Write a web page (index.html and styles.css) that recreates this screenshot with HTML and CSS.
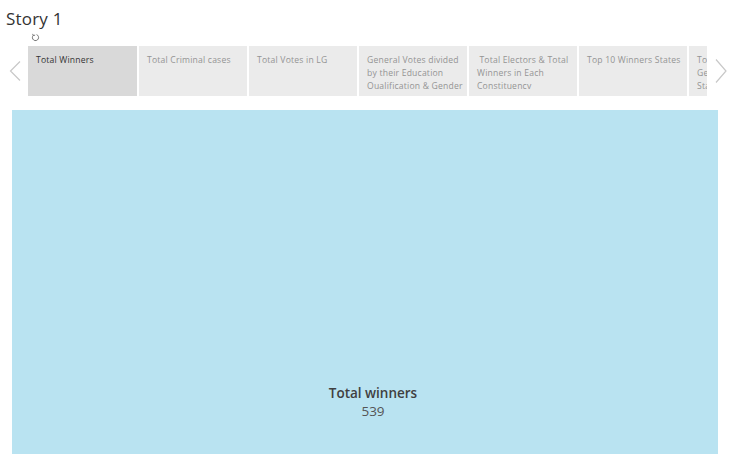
FILE: index.html
```html
<!DOCTYPE html>
<html>
<head>
<meta charset="utf-8">
<link rel="stylesheet" href="styles.css">
</head>
<body>
<div class="title">Story 1</div>
<div class="revert-row">
  <svg class="revert" width="9" height="9" viewBox="0 0 9 9"><path d="M2.2 2.4 A3.1 3.1 0 1 0 5.6 1.6" fill="none" stroke="#666" stroke-width="0.9"/><path d="M1.6 0.9 L2.4 2.6 L4.1 2.1" fill="none" stroke="#666" stroke-width="0.9"/></svg>
</div>
<div class="nav">
  <div class="arrow left"><svg width="12" height="20" viewBox="0 0 12 20"><path d="M11 0.5 L1.5 10 L11 19.5" fill="none" stroke="#c8c8c8" stroke-width="1.2"/></svg></div>
  <div class="tabs">
    <div class="tab active">Total Winners</div>
    <div class="tab">Total Criminal cases</div>
    <div class="tab">Total Votes in LG</div>
    <div class="tab">General Votes divided by their Education Oualification &amp; Gender</div>
    <div class="tab">&nbsp;Total Electors &amp; Total Winners in Each Constituencv</div>
    <div class="tab">Top 10 Winners States</div>
    <div class="tab">Total Votes by<br>Gender in Each<br>State</div>
  </div>
  <div class="arrow right"><svg width="12" height="24" viewBox="0 0 12 24"><path d="M1 0.5 L11 12 L1 23.5" fill="none" stroke="#c8c8c8" stroke-width="1.2"/></svg></div>
</div>
<div class="viz">
  <div class="label">Total winners</div>
  <div class="value">539</div>
</div>
</body>
</html>
```
FILE: styles.css
```css
html, body { margin: 0; padding: 0; background: #fff; }
body { font-family: "Open Sans", "Noto Sans", sans-serif; color: #333; width: 736px; height: 454px; overflow: hidden; }
.title { font-size: 17px; line-height: 20px; padding: 9px 0 0 6px; height: 21px; color: #333; letter-spacing: 0.2px; }
.revert-row { height: 13px; padding-left: 31px; }
.revert { display: block; margin-top: 3px; }
.nav { display: flex; height: 50px; }
.arrow { width: 28px; display: flex; align-items: center; }
.arrow.left { justify-content: flex-start; padding-left: 9px; box-sizing: border-box; }
.arrow.right { width: 29px; padding-left: 8px; box-sizing: border-box; }
.tabs { display: flex; width: 679px; overflow: hidden; gap: 2px; }
.tab { flex: 0 0 108px; background: #ebebeb; color: #949494; font-size: 8.6px; letter-spacing: 0.2px; line-height: 13px; padding: 8px 4px 0 8px; box-sizing: border-box; overflow: hidden; white-space: normal; }
.tab.active { background: #d9d9d9; color: #333; flex-basis: 109px; }
.viz { margin: 14px 18px 0 12px; height: 345px; background: #b9e3f1; display: flex; flex-direction: column; align-items: center; justify-content: flex-end; padding: 0 0 35px 16px; box-sizing: border-box; }
.label { font-size: 13.5px; font-weight: 600; color: #404040; line-height: 18px; }
.value { font-size: 13.5px; color: #555; line-height: 18px; }
```
